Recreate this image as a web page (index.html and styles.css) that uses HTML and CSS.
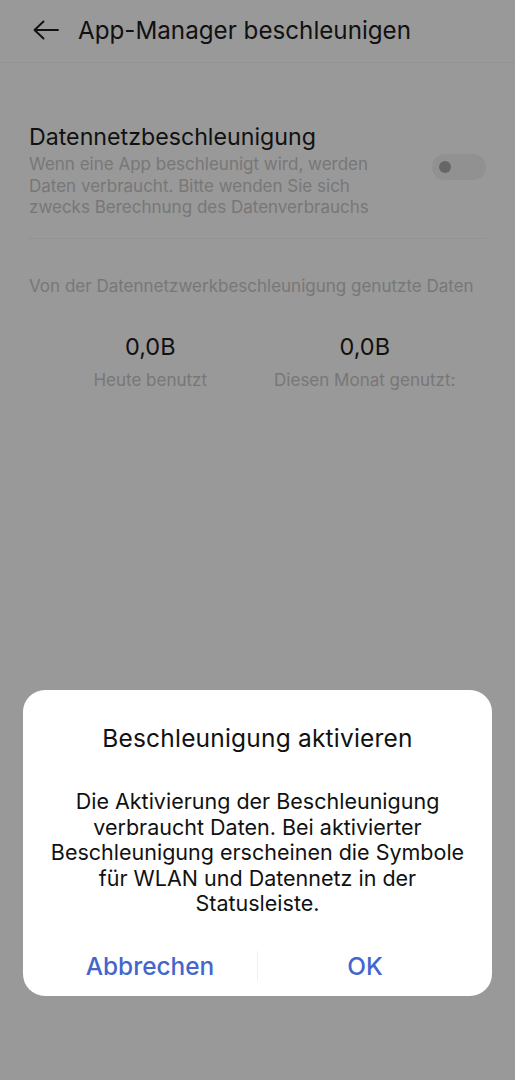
FILE: index.html
```html
<!DOCTYPE html>
<html lang="de">
<head>
<meta charset="utf-8">
<link rel="stylesheet" href="styles.css">
</head>
<body>
<div class="screen">
  <header class="topbar">
    <svg class="back" width="26" height="20" viewBox="0 0 26 20"><path d="M10.5 1.5 L1.5 10 L10.5 18.5 M1.5 10 H25" fill="none" stroke="#111" stroke-width="1.9" stroke-linecap="round" stroke-linejoin="round"/></svg>
    <h1 class="title">App-Manager beschleunigen</h1>
  </header>
  <section class="setting">
    <div class="setting-text">
      <div class="setting-title">Datennetzbeschleunigung</div>
      <div class="setting-desc">Wenn eine App beschleunigt wird, werden Daten verbraucht. Bitte wenden Sie sich zwecks Berechnung des Datenverbrauchs</div>
    </div>
    <div class="toggle"><span class="knob"></span></div>
  </section>
  <div class="divider"></div>
  <div class="usage-caption">Von der Datennetzwerkbeschleunigung genutzte Daten</div>
  <div class="stats">
    <div class="stat"><div class="stat-value">0,0B</div><div class="stat-label">Heute benutzt</div></div>
    <div class="stat"><div class="stat-value">0,0B</div><div class="stat-label">Diesen Monat genutzt:</div></div>
  </div>
  <div class="dialog">
    <div class="dialog-title">Beschleunigung aktivieren</div>
    <div class="dialog-body">Die Aktivierung der Beschleunigung verbraucht Daten. Bei aktivierter Beschleunigung erscheinen die Symbole für WLAN und Datennetz in der Statusleiste.</div>
    <div class="dialog-actions">
      <div class="btn">Abbrechen</div>
      <div class="sep"></div>
      <div class="btn">OK</div>
    </div>
  </div>
</div>
</body>
</html>
```
FILE: styles.css
```css
* { box-sizing: border-box; }
html, body { margin: 0; padding: 0; }
body {
  width: 515px;
  height: 1080px;
  background: #999999;
  font-family: Inter, Roboto, "Noto Sans", "Liberation Sans", sans-serif;
  overflow: hidden;
}
.screen {
  position: relative;
  width: 515px;
  height: 1080px;
  display: flex;
  flex-direction: column;
}
.topbar {
  height: 63px;
  display: flex;
  align-items: center;
  padding-left: 33px;
  border-bottom: 1px solid #939393;
  padding-bottom: 2px;
}
.back { flex: none; }
.title {
  margin: 0 0 0 19px;
  font-size: 24.2px;
  font-weight: 400;
  color: #111;
}
.setting {
  display: flex;
  align-items: center;
  padding: 60px 29px 0 29px;
}
.setting-text { flex: 1; }
.setting-title {
  font-size: 23.2px;
  color: #111;
  line-height: 29px;
}
.setting-desc {
  width: 360px;
  font-size: 17px;
  line-height: 21.5px;
  color: #777;
  margin-top: 2px;
}
.toggle {
  flex: none;
  width: 54px;
  height: 26px;
  border-radius: 13px;
  background: #919191;
  position: relative;
  margin-top: -8px;
}
.knob {
  position: absolute;
  left: 7px;
  top: 7px;
  width: 12px;
  height: 12px;
  border-radius: 50%;
  background: #666;
}
.divider {
  margin: 19px 29px 0 29px;
  height: 1px;
  background: #929292;
}
.usage-caption {
  margin: 37px 29px 0 29px;
  font-size: 17px;
  color: #777;
}
.stats {
  display: flex;
  padding: 0 43px;
  margin-top: 36px;
}
.stat {
  flex: 1;
  text-align: center;
}
.stat-value {
  font-size: 23.5px;
  color: #111;
  line-height: 30px;
}
.stat-label {
  font-size: 17px;
  color: #777;
  margin-top: 8px;
}
.dialog {
  position: absolute;
  left: 23px;
  top: 690px;
  width: 469px;
  height: 306px;
  background: #fff;
  border-radius: 22px;
  display: flex;
  flex-direction: column;
  align-items: center;
  padding: 33px 20px 0 20px;
}
.dialog-title {
  font-size: 24.5px;
  color: #111;
  line-height: 30px;
  letter-spacing: 0.2px;
}
.dialog-body {
  max-width: 416px;
  margin-top: 36px;
  font-size: 21.5px;
  line-height: 25.5px;
  color: #111;
  text-align: center;
}
.dialog-actions {
  margin-top: 34px;
  width: 100%;
  display: flex;
  align-items: center;
}
.btn {
  flex: 1;
  text-align: center;
  font-size: 24.4px;
  font-weight: 500;
  color: #4466cc;
}
.sep {
  width: 1px;
  height: 30px;
  background: #f0f0f0;
}
```
